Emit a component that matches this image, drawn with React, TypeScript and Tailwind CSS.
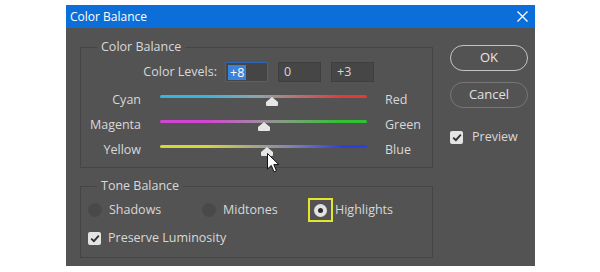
const sliders = [
  {
    left: "Cyan",
    right: "Red",
    value: 8,
    track:
      "bg-[linear-gradient(to_right,#3ab4de_0%,#3ab4de_22%,#8fa4ab_48%,#b07b7b_62%,#e03a3a_88%,#e03a3a_100%)]",
  },
  {
    left: "Magenta",
    right: "Green",
    value: 0,
    track:
      "bg-[linear-gradient(to_right,#d444d4_0%,#d444d4_22%,#a08aa0_48%,#7fa07f_62%,#2fc22f_88%,#2fc22f_100%)]",
  },
  {
    left: "Yellow",
    right: "Blue",
    value: 3,
    track:
      "bg-[linear-gradient(to_right,#d6d63a_0%,#d6d63a_22%,#a3a08a_48%,#8586ad_62%,#2f3fdc_88%,#2f3fdc_100%)]",
    cursor: true,
  },
];

const Thumb = () => (
  <svg width="12" height="9" viewBox="0 0 12 9">
    <path d="M6 0 L12 5 V8 Q12 9 11 9 H1 Q0 9 0 8 V5 Z" fill="#e6e6e6" />
  </svg>
);

const Cursor = () => (
  <svg width="13" height="20" viewBox="0 0 13 20">
    <path
      d="M0.5 0.5 V16 L4.3 12.4 L7 18.8 L9.4 17.8 L6.8 11.6 H11.8 Z"
      fill="#ffffff"
      stroke="#111111"
      strokeWidth="1"
      strokeLinejoin="round"
    />
  </svg>
);

const CheckBox = () => (
  <span className="flex h-[13px] w-[13px] items-center justify-center rounded-[2px] bg-[#e4e4e4]">
    <svg width="10" height="9" viewBox="0 0 10 9">
      <path d="M1.2 4.6 L3.9 7.2 L8.8 1.6" fill="none" stroke="#2e2e2e" strokeWidth="1.8" />
    </svg>
  </span>
);

const Radio = ({ on }: { on?: boolean }) =>
  on ? (
    <span className="flex h-[13px] w-[13px] items-center justify-center rounded-full bg-[#e2e2e2]">
      <span className="h-[5px] w-[5px] rounded-full bg-[#2c2c2c]" />
    </span>
  ) : (
    <span className="h-[14px] w-[14px] rounded-full border border-[#4b4b4b] bg-[#494949]" />
  );

const App = () => {
  return (
    <div className="h-[272px] w-[600px] bg-white pl-[66px] pt-[5px] font-['Open_Sans',sans-serif] text-[12.5px] text-[#d8d8d8]">
      <div className="flex h-[261px] w-[469px] flex-col">
        <div className="flex h-[23px] items-center justify-between bg-[#0c6fd9] pl-[4px] pr-[7px] text-[12px] text-white">
          <span className="leading-[16px]">Color Balance</span>
          <svg width="11" height="11" viewBox="0 0 11 11">
            <path d="M0.5 0.5 L10.5 10.5 M10.5 0.5 L0.5 10.5" stroke="#ffffff" strokeWidth="1.3" />
          </svg>
        </div>

        <div className="flex flex-1 bg-[#535353]">
          <div className="w-[367px] pl-[14px] pt-[19px]">
            <div className="h-[121px] border border-[#454545]">
              <div className="-mt-[9px] ml-[16px] w-fit bg-[#535353] px-[4px] leading-[16px]">
                Color Balance
              </div>
              <div className="mt-[7px] flex h-[20px] items-center">
                <span className="w-[136px] text-right">Color Levels:</span>
                <div className="ml-[8px] flex gap-[10px]">
                  <div className="flex h-[20px] w-[43px] items-center border border-[#2f66b8] bg-[#454545] pl-[2px]">
                    <span className="bg-[#3b82dc] px-[2px] leading-[15px] text-white">+8</span>
                  </div>
                  <div className="flex h-[20px] w-[43px] items-center border border-[#3f3f3f] bg-[#464646] pl-[5px]">
                    0
                  </div>
                  <div className="flex h-[20px] w-[43px] items-center border border-[#3f3f3f] bg-[#464646] pl-[5px]">
                    +3
                  </div>
                </div>
              </div>

              <div className="mt-[10px] flex flex-col">
                {sliders.map((s) => (
                  <div key={s.left} className="flex h-[25px] items-start">
                    <span className="w-[60px] text-right leading-[16px]">{s.left}</span>
                    <div className={`relative ml-[19px] mt-[3px] h-[3px] w-[207px] rounded-full ${s.track}`}>
                      <span
                        className="absolute top-[2px] flex -translate-x-1/2"
                        style={{ left: `${50 + s.value / 2}%` }}
                      >
                        <Thumb />
                      </span>
                      {s.cursor && (
                        <span className="absolute left-[107px] top-[8px] flex">
                          <Cursor />
                        </span>
                      )}
                    </div>
                    <span className="ml-[18px] leading-[16px]">{s.right}</span>
                  </div>
                ))}
              </div>
            </div>

            <div className="mt-[18px] h-[72px] border border-[#454545]">
              <div className="-mt-[9px] ml-[16px] w-fit bg-[#535353] px-[4px] leading-[16px]">
                Tone Balance
              </div>
              <div className="mt-[4px] grid h-[24px] grid-cols-[114px_106px_auto] items-center pl-[7px]">
                <label className="flex items-center gap-[7px]">
                  <Radio />
                  Shadows
                </label>
                <label className="flex items-center gap-[7px]">
                  <Radio />
                  Midtones
                </label>
                <label className="flex items-center gap-[2px]">
                  <span className="flex h-[24px] w-[25px] items-center justify-center border-2 border-[#e4e62c]">
                    <Radio on />
                  </span>
                  Highlights
                </label>
              </div>
              <label className="mt-[8px] flex h-[16px] items-center gap-[7px] pl-[7px]">
                <CheckBox />
                Preserve Luminosity
              </label>
            </div>
          </div>

          <div className="ml-[17px] flex flex-col pt-[17px]">
            <button className="flex h-[26px] w-[78px] items-center justify-center rounded-full border-[1.5px] border-[#c4c4c4] text-[13px] text-[#e8e8e8]">
              OK
            </button>
            <button className="mt-[11px] flex h-[26px] w-[78px] items-center justify-center rounded-full border border-[#777777] text-[13px] text-[#e0e0e0]">
              Cancel
            </button>
            <label className="mt-[20px] flex items-center gap-[9px]">
              <CheckBox />
              Preview
            </label>
          </div>
        </div>
      </div>
    </div>
  );
};

export default App;
